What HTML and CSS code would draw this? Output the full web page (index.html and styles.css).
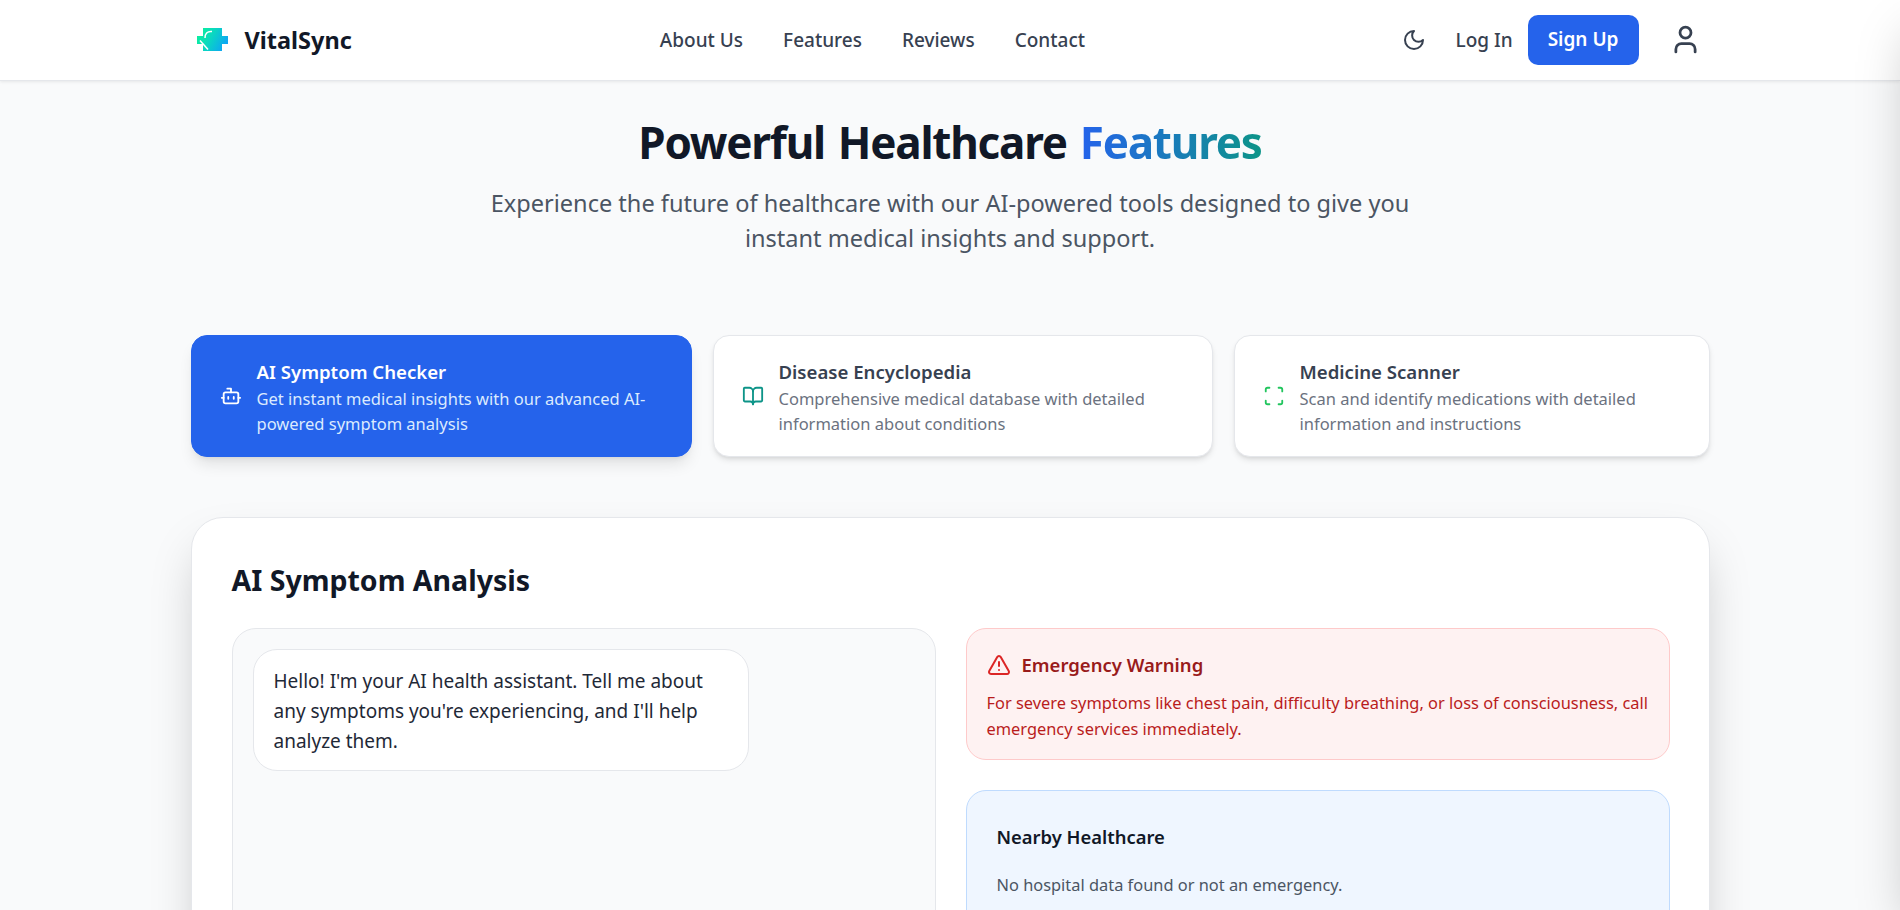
FILE: index.html
```html
<!DOCTYPE html>
<html lang="en">
<head>
    <meta charset="UTF-8">
    <meta name="viewport" content="width=device-width, initial-scale=1.0">
    <title>VitalSync - Features</title>
    <link rel="stylesheet" href="styles.css">
</head>
<body>
    <header class="navbar">
        <div class="nav-inner">
            <a class="brand" href="#">
                <svg class="brand-logo" viewBox="0 0 32 24" width="32" height="24">
                    <defs>
                        <linearGradient id="logoGrad" x1="0" y1="0.2" x2="1" y2="0.6">
                            <stop offset="0" stop-color="#0cf29a"/>
                            <stop offset="0.45" stop-color="#0ad8c0"/>
                            <stop offset="1" stop-color="#0ea5f5"/>
                        </linearGradient>
                    </defs>
                    <path fill="url(#logoGrad)" d="M6 0H25V8H31V16H25V23H6V16H0V8H6Z"/>
                    <path class="logo-cut" d="M15 3.5C10 3 8 6 8 10"/>
                    <path class="logo-cut" d="M3 12.5l8 9"/>
                </svg>
                <span>VitalSync</span>
            </a>
            <nav class="nav-links">
                <a href="#">About Us</a>
                <a href="#">Features</a>
                <a href="#">Reviews</a>
                <a href="#">Contact</a>
            </nav>
            <div class="nav-actions">
                <svg class="icon-moon" viewBox="0 0 24 24" width="24" height="24"><path d="M12 3a6 6 0 0 0 9 9 9 9 0 1 1-9-9Z"/></svg>
                <a class="login" href="#">Log In</a>
                <a class="signup" href="#">Sign Up</a>
                <svg class="icon-user" viewBox="0 0 24 24" width="33" height="33"><path d="M19 21v-2a4 4 0 0 0-4-4H9a4 4 0 0 0-4 4v2"/><circle cx="12" cy="7" r="4"/></svg>
            </div>
        </div>
    </header>

    <main class="page">
        <section class="hero">
            <h1>Powerful Healthcare <span class="grad">Features</span></h1>
            <p>Experience the future of healthcare with our AI-powered tools designed to give you instant medical insights and support.</p>
        </section>

        <section class="tabs">
            <div class="tab active">
                <svg class="tab-icon" viewBox="0 0 24 24" width="22" height="22"><path d="M12 8V4H8"/><rect x="4" y="8" width="16" height="12" rx="2"/><path d="M2 14h2M20 14h2M15 13v2M9 13v2"/></svg>
                <div>
                    <h3>AI Symptom Checker</h3>
                    <p>Get instant medical insights with our advanced AI-powered symptom analysis</p>
                </div>
            </div>
            <div class="tab">
                <svg class="tab-icon teal" viewBox="0 0 24 24" width="22" height="22"><path d="M12 7v14"/><path d="M3 18a1 1 0 0 1-1-1V4a1 1 0 0 1 1-1h5a4 4 0 0 1 4 4 4 4 0 0 1 4-4h5a1 1 0 0 1 1 1v13a1 1 0 0 1-1 1h-6a3 3 0 0 0-3 3 3 3 0 0 0-3-3z"/></svg>
                <div>
                    <h3>Disease Encyclopedia</h3>
                    <p>Comprehensive medical database with detailed information about conditions</p>
                </div>
            </div>
            <div class="tab">
                <svg class="tab-icon green" viewBox="0 0 24 24" width="22" height="22"><path d="M3 7V5a2 2 0 0 1 2-2h2M17 3h2a2 2 0 0 1 2 2v2M21 17v2a2 2 0 0 1-2 2h-2M7 21H5a2 2 0 0 1-2-2v-2"/></svg>
                <div>
                    <h3>Medicine Scanner</h3>
                    <p>Scan and identify medications with detailed information and instructions</p>
                </div>
            </div>
        </section>

        <section class="panel">
            <h2>AI Symptom Analysis</h2>
            <div class="panel-grid">
                <div class="chat">
                    <div class="bubble">Hello! I'm your AI health assistant. Tell me about any symptoms you're experiencing, and I'll help analyze them.</div>
                </div>
                <div class="side">
                    <div class="warning">
                        <div class="warning-title">
                            <svg viewBox="0 0 24 24" width="24" height="24"><path d="m21.73 18-8-14a2 2 0 0 0-3.48 0l-8 14A2 2 0 0 0 4 21h16a2 2 0 0 0 1.73-3"/><path d="M12 9v4M12 17h.01"/></svg>
                            <h4>Emergency Warning</h4>
                        </div>
                        <p>For severe symptoms like chest pain, difficulty breathing, or loss of consciousness, call emergency services immediately.</p>
                    </div>
                    <div class="nearby">
                        <h4>Nearby Healthcare</h4>
                        <p>No hospital data found or not an emergency.</p>
                    </div>
                </div>
            </div>
        </section>
    </main>

    <div class="drawer"></div>
</body>
</html>
```

FILE: styles.css
```css
* { box-sizing: border-box; }
html, body { height: 100%; overflow: hidden; }
body { margin: 0; background: #f9fafb; color: #111827; font-family: "Noto Sans", "Open Sans", Arial, sans-serif; }
a { text-decoration: none; color: inherit; }
h1, h2, h3, h4, p { margin: 0; }
svg { fill: none; stroke: currentColor; stroke-width: 2; stroke-linecap: round; stroke-linejoin: round; flex-shrink: 0; }

.navbar { height: 81px; background: #fff; border-bottom: 1px solid #e5e7eb; box-shadow: 0 1px 3px rgba(0,0,0,.08); }
.nav-inner { width: 1519px; height: 80px; margin: 0 auto; padding: 0 8px 0 6px; display: flex; align-items: center; }
.brand { display: flex; align-items: center; gap: 16px; font-size: 23.5px; font-weight: 700; color: #111827; }
.brand-logo { stroke: none; }
.logo-cut { fill: none; stroke: #fff; stroke-width: 1.5; stroke-linecap: butt; }
.nav-links { display: flex; gap: 40px; margin-left: 308px; font-size: 19px; font-weight: 500; color: #374151; }
.nav-actions { display: flex; align-items: center; margin-left: auto; color: #374151; }
.icon-moon { margin-right: 30px; }
.icon-user { margin-top: -2px; }
.login { font-size: 19px; font-weight: 500; margin-right: 15px; }
.signup { display: block; background: #2563eb; color: #fff; font-size: 19px; font-weight: 600; padding: 11px 20px 13px; border-radius: 10px; line-height: 26px; margin-right: 30px; }

.page { width: 1519px; margin: 0 auto; }
.hero { text-align: center; padding-top: 33px; }
.hero h1 { font-size: 44px; letter-spacing: -1.2px; word-spacing: 2.5px; line-height: 56px; font-weight: 700; color: #111827; }
.grad { background: linear-gradient(90deg, #2563eb, #0d9488); -webkit-background-clip: text; background-clip: text; color: transparent; }
.hero p { width: 960px; margin: 16px auto 0; font-size: 23.55px; line-height: 35px; color: #4b5563; }

.tabs { display: grid; grid-template-columns: 501px 500px 476px; gap: 21px; margin-top: 79px; }
.tab { height: 122px; display: flex; align-items: center; gap: 15px; padding: 3px 24px 0 28px; background: #fff; border: 1px solid #e5e7eb; border-radius: 16px; box-shadow: 0 4px 6px -1px rgba(0,0,0,.1), 0 2px 4px -2px rgba(0,0,0,.1); }
.tab svg { margin-top: -3px; }
.tab h3 { margin-bottom: 1px; font-size: 18.6px; line-height: 26px; font-weight: 600; color: #374151; }
.tab p { font-size: 16.5px; line-height: 25.5px; color: #6b7280; }
.tab.active { background: #2563eb; border-color: #2563eb; box-shadow: 0 10px 15px -3px rgba(0,0,0,.1), 0 4px 6px -4px rgba(0,0,0,.1); }
.tab.active h3 { color: #fff; }
.tab.active p { color: #dbeafe; }
.tab-icon { color: #fff; }
.tab-icon.teal { color: #0d9488; }
.tab-icon.green { color: #22c55e; }

.panel { margin-top: 60px; padding: 42px 40px; height: 600px; background: #fff; border: 1px solid #e5e7eb; border-radius: 32px; box-shadow: 0 25px 50px -12px rgba(0,0,0,.25); }
.panel h2 { font-size: 28.5px; line-height: 40px; font-weight: 700; color: #111827; }
.panel-grid { display: grid; grid-template-columns: 704px 704px; gap: 30px; margin-top: 28px; }
.chat { height: 500px; padding: 20px; background: #f9fafb; border: 1px solid #e5e7eb; border-radius: 24px; }
.bubble { width: 496px; padding: 16px 20px 14px; background: #fff; border: 1px solid #e5e7eb; border-radius: 24px; font-size: 19px; line-height: 30px; color: #1f2937; }
.side { display: flex; flex-direction: column; gap: 30px; }
.warning { height: 132px; padding: 23px 20px 0 20px; background: #fef2f2; border: 1px solid #fecaca; border-radius: 20px; color: #b91c1c; }
.warning-title { display: flex; align-items: center; gap: 11px; }
.warning-title svg { color: #dc2626; }
.warning-title h4 { font-size: 18.5px; font-weight: 600; color: #991b1b; }
.warning p { margin-top: 13px; font-size: 16.4px; line-height: 26px; }
.nearby { height: 300px; padding: 32px 30px; background: #eff6ff; border: 1px solid #bfdbfe; border-radius: 20px; }
.nearby h4 { font-size: 18.4px; line-height: 28px; font-weight: 600; color: #111827; }
.nearby p { margin-top: 21px; font-size: 16.4px; line-height: 26px; color: #4b5563; }

/* closed side drawer, only its shadow shows on the right edge */
.drawer { position: fixed; top: 0; left: 100%; width: 320px; height: 100%; background: #fff; box-shadow: 0 25px 50px -12px rgba(0,0,0,.25); }
```
